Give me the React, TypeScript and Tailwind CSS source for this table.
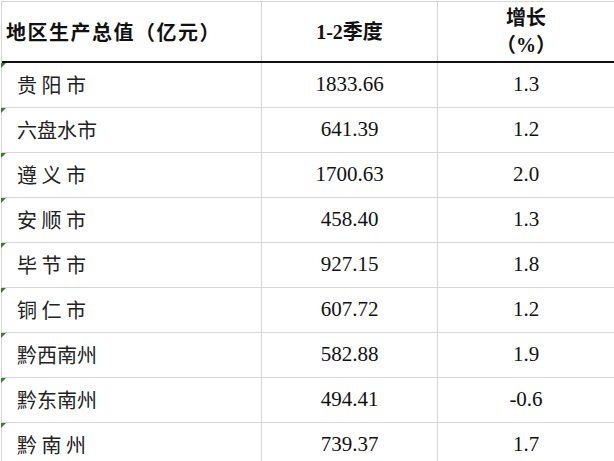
const rows = [
  { name: "贵 阳 市", value: "1833.66", growth: "1.3" },
  { name: "六盘水市", value: "641.39", growth: "1.2" },
  { name: "遵 义 市", value: "1700.63", growth: "2.0" },
  { name: "安 顺 市", value: "458.40", growth: "1.3" },
  { name: "毕 节 市", value: "927.15", growth: "1.8" },
  { name: "铜 仁 市", value: "607.72", growth: "1.2" },
  { name: "黔西南州", value: "582.88", growth: "1.9" },
  { name: "黔东南州", value: "494.41", growth: "-0.6" },
  { name: "黔 南 州", value: "739.37", growth: "1.7" },
];

const serif = "font-['Liberation_Serif','Noto_Sans_CJK_SC',serif]";

const App = () => {
  return (
    <div className="w-[614px] h-[461px] overflow-hidden bg-white text-[#111]">
      <div className="mt-px ml-px border-t border-l border-[#d6d6d6]">
        {/* Header */}
        <div className="grid grid-cols-[260px_176px_176px] h-[61px] border-b-2 border-[#111]">
          <div className="flex items-center pl-[4px] border-r border-[#d6d6d6] font-['Noto_Sans_CJK_SC',sans-serif] font-bold text-[20px] tracking-[1.5px]">
            地区生产总值（亿元）
          </div>
          <div
            className={`flex items-center justify-center border-r border-[#d6d6d6] ${serif} font-bold text-[20px]`}
          >
            1-2季度
          </div>
          <div
            className={`flex flex-col items-center justify-center ${serif} font-bold text-[20px] leading-[27px]`}
          >
            <span>增长</span>
            <span>（%）</span>
          </div>
        </div>

        {/* Rows */}
        {rows.map((r) => (
          <div
            key={r.name}
            className="relative grid grid-cols-[260px_176px_176px] h-[45px] border-b border-[#d6d6d6]"
          >
            <span className="absolute left-[-1px] top-0 w-0 h-0 border-t-[5px] border-r-[5px] border-t-[#3a7d2c] border-r-transparent" />
            <div className="flex items-center pl-[15px] border-r border-[#d6d6d6] font-['Noto_Sans_CJK_SC',sans-serif] text-[20px] text-[#222] whitespace-pre">
              {r.name}
            </div>
            <div
              className={`flex items-center justify-center border-r border-[#d6d6d6] ${serif} text-[21px]`}
            >
              {r.value}
            </div>
            <div className={`flex items-center justify-center ${serif} text-[21px]`}>
              {r.growth}
            </div>
          </div>
        ))}
      </div>
    </div>
  );
};

export default App;
